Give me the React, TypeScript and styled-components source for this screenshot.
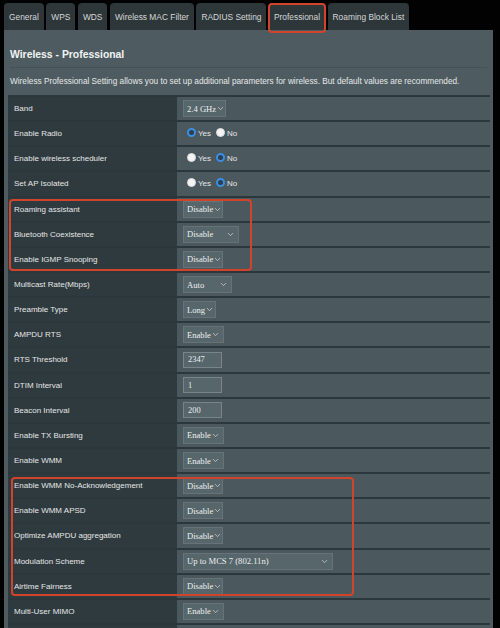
import React from "react";
import styled, { createGlobalStyle } from "styled-components";
import { ChevronDown } from "lucide-react";

const GlobalStyle = createGlobalStyle`
  html, body {
    margin: 0;
    padding: 0;
    background: #000;
    overflow: hidden;
  }
  body {
    font-family: "Liberation Sans", Arial, sans-serif;
  }
`;

const Page = styled.div`
  width: 500px;
  height: 628px;
  overflow: hidden;
  background: #020202;
  padding-top: 3px;
  box-sizing: border-box;
`;

const TabBar = styled.div`
  display: flex;
  gap: 2.5px;
  padding-left: 4px;
  height: 27px;
`;

const Tab = styled.div<{ $active?: boolean }>`
  position: relative;
  height: 27px;
  display: flex;
  align-items: center;
  padding: 1px 5px 0;
  box-sizing: border-box;
  background: #2d3639;
  color: #d4d6d7;
  font-size: 8.4px;
  border-radius: 4px 4px 0 0;
  white-space: nowrap;

  ${(p) =>
    p.$active &&
    `
    &::after {
      content: "";
      position: absolute;
      left: -1px;
      right: -1px;
      top: 0;
      bottom: -3px;
      border: 2px solid #d2432c;
      border-radius: 4px;
    }
  `}
`;

const Panel = styled.div`
  margin-left: 4px;
  width: 489px;
  background: #4e5c61;
  padding: 0 3px 0 4px;
  box-sizing: border-box;
  height: 600px;
`;

const Header = styled.div`
  padding: 19px 3px 0 2px;
`;

const Title = styled.h1`
  margin: 0;
  font-size: 10.4px;
  font-weight: bold;
  color: #f2f3f3;
  padding-bottom: 7px;
  border-bottom: 1px solid #445257;
`;

const Description = styled.p`
  margin: 0;
  padding: 9px 0 9px;
  font-size: 8.25px;
  color: #e6e8e8;
  white-space: nowrap;
`;

const Table = styled.div`
  display: flex;
  flex-direction: column;
  border-top: 2px solid #2c373b;
`;

const Group = styled.div<{ $w: number; $inset: number }>`
  position: relative;

  &::after {
    content: "";
    position: absolute;
    left: ${(p) => p.$inset}px;
    top: ${(p) => p.$inset}px;
    bottom: ${(p) => p.$inset + 1}px;
    width: ${(p) => p.$w}px;
    border: 2px solid #d2432c;
    border-radius: 4px;
    pointer-events: none;
  }
`;

const Row = styled.div`
  display: grid;
  grid-template-columns: 169px 1fr;
  height: 25.15px;
  box-sizing: border-box;
  border-bottom: 2px solid #2c373b;
`;

const Label = styled.div`
  background: #2f3a3e;
  color: #e4e6e7;
  font-size: 8px;
  display: flex;
  align-items: center;
  padding-left: 6px;
  white-space: nowrap;
`;

const Cell = styled.div`
  background: #4b595e;
  display: flex;
  align-items: center;
  padding-left: 6px;
`;

const Select = styled.div<{ $w: number }>`
  width: ${(p) => p.$w}px;
  height: 17px;
  box-sizing: border-box;
  background: #56666b;
  border: 1px solid #667479;
  display: flex;
  align-items: center;
  justify-content: space-between;
  padding: 0 3px 0 3px;
  font-family: "Liberation Serif", "Times New Roman", serif;
  font-size: 8.6px;
  color: #eceeee;
  white-space: nowrap;

  svg {
    color: #d0d4d5;
    flex-shrink: 0;
  }
`;

const TextInput = styled.input`
  width: 39px;
  height: 16px;
  box-sizing: border-box;
  background: #56666b;
  border: 1px solid #76858a;
  padding: 0 4px;
  font-family: "Liberation Serif", "Times New Roman", serif;
  font-size: 8.4px;
  color: #eceeee;
  outline: none;
`;

const RadioGroup = styled.div`
  display: flex;
  align-items: center;
  gap: 5px;
  padding-left: 4px;
`;

const RadioItem = styled.label`
  display: flex;
  align-items: center;
  gap: 2px;
  font-size: 8px;
  color: #e4e6e7;
`;

const Dot = styled.span<{ $on?: boolean }>`
  width: 9px;
  height: 9px;
  border-radius: 50%;
  box-sizing: border-box;
  background: ${(p) => (p.$on ? "#2f3e4a" : "#f4f4f4")};
  border: ${(p) => (p.$on ? "2px solid #3a8ee6" : "1px solid #dcdcdc")};
  position: relative;
  top: -1px;
`;

type Ctrl =
  | { kind: "select"; value: string; w: number }
  | { kind: "input"; value: string }
  | { kind: "radio"; yes: boolean };

type Item = { label: string; ctrl: Ctrl };

const sel = (value: string, w = 40): Ctrl => ({ kind: "select", value, w });

const before: Item[] = [
  { label: "Band", ctrl: sel("2.4 GHz", 43) },
  { label: "Enable Radio", ctrl: { kind: "radio", yes: true } },
  { label: "Enable wireless scheduler", ctrl: { kind: "radio", yes: false } },
  { label: "Set AP Isolated", ctrl: { kind: "radio", yes: false } },
];

const group1: Item[] = [
  { label: "Roaming assistant", ctrl: sel("Disable") },
  { label: "Bluetooth Coexistence", ctrl: sel("Disable", 56) },
  { label: "Enable IGMP Snooping", ctrl: sel("Disable") },
];

const middle: Item[] = [
  { label: "Multicast Rate(Mbps)", ctrl: sel("Auto", 49) },
  { label: "Preamble Type", ctrl: sel("Long", 33) },
  { label: "AMPDU RTS", ctrl: sel("Enable", 41) },
  { label: "RTS Threshold", ctrl: { kind: "input", value: "2347" } },
  { label: "DTIM Interval", ctrl: { kind: "input", value: "1" } },
  { label: "Beacon Interval", ctrl: { kind: "input", value: "200" } },
  { label: "Enable TX Bursting", ctrl: sel("Enable", 41) },
  { label: "Enable WMM", ctrl: sel("Enable", 41) },
];

const group2: Item[] = [
  { label: "Enable WMM No-Acknowledgement", ctrl: sel("Disable") },
  { label: "Enable WMM APSD", ctrl: sel("Disable") },
  { label: "Optimize AMPDU aggregation", ctrl: sel("Disable") },
  { label: "Modulation Scheme", ctrl: sel("Up to MCS 7 (802.11n)", 150) },
  { label: "Airtime Fairness", ctrl: sel("Disable") },
];

// last row only peeks in at the bottom edge of the screenshot
const after: Item[] = [
  { label: "Multi-User MIMO", ctrl: sel("Enable", 41) },
  { label: "", ctrl: sel("", 41) },
];

function Control({ ctrl }: { ctrl: Ctrl }) {
  if (ctrl.kind === "select") {
    return (
      <Select $w={ctrl.w}>
        <span>{ctrl.value}</span>
        <ChevronDown size={9} strokeWidth={2} />
      </Select>
    );
  }
  if (ctrl.kind === "input") {
    return <TextInput readOnly value={ctrl.value} />;
  }
  return (
    <RadioGroup>
      <RadioItem>
        <Dot $on={ctrl.yes} />
        Yes
      </RadioItem>
      <RadioItem>
        <Dot $on={!ctrl.yes} />
        No
      </RadioItem>
    </RadioGroup>
  );
}

function Rows({ items }: { items: Item[] }) {
  return (
    <>
      {items.map((it, i) => (
        <Row key={it.label || i}>
          <Label>{it.label}</Label>
          <Cell>
            <Control ctrl={it.ctrl} />
          </Cell>
        </Row>
      ))}
    </>
  );
}

const tabs = [
  "General",
  "WPS",
  "WDS",
  "Wireless MAC Filter",
  "RADIUS Setting",
  "Professional",
  "Roaming Block List",
];

export default function App() {
  return (
    <Page>
      <GlobalStyle />
      <TabBar>
        {tabs.map((t) => (
          <Tab key={t} $active={t === "Professional"}>
            {t}
          </Tab>
        ))}
      </TabBar>
      <Panel>
        <Header>
          <Title>Wireless - Professional</Title>
          <Description>
            Wireless Professional Setting allows you to set up additional
            parameters for wireless. But default values are recommended.
          </Description>
        </Header>
        <Table>
          <Rows items={before} />
          <Group $w={239} $inset={1}>
            <Rows items={group1} />
          </Group>
          <Rows items={middle} />
          <Group $w={339} $inset={3}>
            <Rows items={group2} />
          </Group>
          <Rows items={after} />
        </Table>
      </Panel>
    </Page>
  );
}
